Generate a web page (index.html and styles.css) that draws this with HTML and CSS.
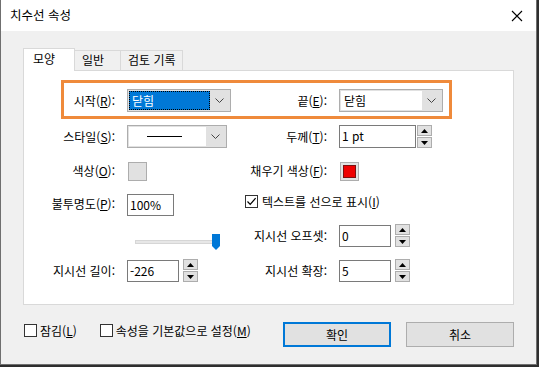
FILE: index.html
```html
<!DOCTYPE html>
<html lang="ko">
<head>
<meta charset="UTF-8" />
<title>치수선 속성</title>
<link rel="stylesheet" href="styles.css">
</head>
<body>

<div class="dialog">
  <div class="titlebar">
    <span class="title">치수선 속성</span>
    <svg class="close" width="12" height="12" viewBox="0 0 12 12">
      <path d="M1 1 L11 11 M11 1 L1 11" stroke="#000" stroke-width="1.1" fill="none" />
    </svg>
  </div>

  <div class="content">
    <div class="tabs">
      <div class="tab active">모양</div>
      <div class="tab">일반</div>
      <div class="tab">검토 기록</div>
    </div>

    <div class="panel">
      <div class="highlight"></div>
      <div class="form-grid">
        <!-- row 1 -->
        <label class="lbl">시작(<u>R</u>):</label>
        <div class="combo w104">
          <span class="combo-text selected">닫힘</span>
          <span class="arrow"><svg width="9" height="5" viewBox="0 0 9 5"><path d="M0.5 0.5 L4.5 4.5 L8.5 0.5" stroke="#444" fill="none" /></svg></span>
        </div>
        <label class="lbl">끝(<u>E</u>):</label>
        <div class="combo w104">
          <span class="combo-text">닫힘</span>
          <span class="arrow"><svg width="9" height="5" viewBox="0 0 9 5"><path d="M0.5 0.5 L4.5 4.5 L8.5 0.5" stroke="#444" fill="none" /></svg></span>
        </div>

        <!-- row 2 -->
        <label class="lbl">스타일(<u>S</u>):</label>
        <div class="combo w100">
          <span class="combo-text"><span class="line-sample"></span></span>
          <span class="arrow"><svg width="9" height="5" viewBox="0 0 9 5"><path d="M0.5 0.5 L4.5 4.5 L8.5 0.5" stroke="#444" fill="none" /></svg></span>
        </div>
        <label class="lbl">두께(<u>T</u>):</label>
        <div class="spin-field">
          <div class="textbox w76">1 pt</div>
          <div class="spinner">
            <span class="spin-btn"><svg width="7" height="4" viewBox="0 0 7 4"><path d="M0 4 L3.5 0 L7 4 Z" fill="#000" /></svg></span>
            <span class="spin-btn"><svg width="7" height="4" viewBox="0 0 7 4"><path d="M0 0 L3.5 4 L7 0 Z" fill="#000" /></svg></span>
          </div>
        </div>

        <!-- row 3 -->
        <label class="lbl">색상(<u>O</u>):</label>
        <div class="swatch"></div>
        <label class="lbl">채우기 색상(<u>F</u>):</label>
        <div class="swatch"><span class="swatch-fill"></span></div>

        <!-- row 4 -->
        <label class="lbl">불투명도(<u>P</u>):</label>
        <div class="textbox w47">100%</div>
        <div class="check-wide">
          <span class="checkbox checked">
            <svg width="11" height="11" viewBox="0 0 11 11"><path d="M1.5 5.5 L4.2 8.3 L9.6 2.2" stroke="#000" stroke-width="1.2" fill="none" /></svg>
          </span>
          <span>텍스트를 선으로 표시(<u>I</u>)</span>
        </div>

        <!-- row 5 -->
        <div class="slider-cell">
          <div class="slider">
            <span class="track"></span>
            <svg class="thumb" width="8" height="16" viewBox="0 0 8 16"><path d="M0 0 H8 V12 L4 16 L0 12 Z" fill="#0078d7" /></svg>
          </div>
        </div>
        <label class="lbl">지시선 오프셋:</label>
        <div class="spin-field">
          <div class="textbox w52">0</div>
          <div class="spinner gap4">
            <span class="spin-btn"><svg width="7" height="4" viewBox="0 0 7 4"><path d="M0 4 L3.5 0 L7 4 Z" fill="#000" /></svg></span>
            <span class="spin-btn"><svg width="7" height="4" viewBox="0 0 7 4"><path d="M0 0 L3.5 4 L7 0 Z" fill="#000" /></svg></span>
          </div>
        </div>

        <!-- row 6 -->
        <label class="lbl">지시선 길이:</label>
        <div class="spin-field">
          <div class="textbox w52">-226</div>
          <div class="spinner gap4">
            <span class="spin-btn"><svg width="7" height="4" viewBox="0 0 7 4"><path d="M0 4 L3.5 0 L7 4 Z" fill="#000" /></svg></span>
            <span class="spin-btn"><svg width="7" height="4" viewBox="0 0 7 4"><path d="M0 0 L3.5 4 L7 0 Z" fill="#000" /></svg></span>
          </div>
        </div>
        <label class="lbl">지시선 확장:</label>
        <div class="spin-field">
          <div class="textbox w52">5</div>
          <div class="spinner gap4">
            <span class="spin-btn"><svg width="7" height="4" viewBox="0 0 7 4"><path d="M0 4 L3.5 0 L7 4 Z" fill="#000" /></svg></span>
            <span class="spin-btn"><svg width="7" height="4" viewBox="0 0 7 4"><path d="M0 0 L3.5 4 L7 0 Z" fill="#000" /></svg></span>
          </div>
        </div>
      </div>
    </div>

    <div class="footer">
      <div class="footer-checks">
        <label class="check"><span class="checkbox"></span><span>잠김(<u>L</u>)</span></label>
        <label class="check"><span class="checkbox"></span><span>속성을 기본값으로 설정(<u>M</u>)</span></label>
      </div>
      <div class="buttons">
        <button class="btn default">확인</button>
        <button class="btn">취소</button>
      </div>
    </div>
  </div>
</div>

</body>
</html>
```

FILE: styles.css
```css
/* Basic reset */
* {
  box-sizing: border-box;
  font-family: "Noto Sans CJK KR", "Noto Sans", sans-serif;
}
body {
  margin: 0;
  background: #2e2e2e;
  font-size: 12px;
  color: #000;
}
u {
  text-decoration: underline;
  text-underline-offset: 1px;
}
.dialog {
  width: 537px;
  height: 365px;
  background: #f0f0f0;
  border: 1px solid #6f6f6f;
  border-top: none;
}
.titlebar {
  height: 31px;
  background: #fff;
  display: flex;
  align-items: center;
  justify-content: space-between;
  padding: 0 13px 0 9px;
}
.title {
  font-size: 12.5px;
  line-height: 1;
}
.content {
  padding: 17px 22px 0 22px;
}

/* tabs */
.tabs {
  display: flex;
  align-items: flex-end;
  height: 22px;
}
.tab {
  height: 20px;
  padding: 0 0 0 7px;
  border: 1px solid #d9d9d9;
  border-bottom: none;
  background: #f0f0f0;
  line-height: 18px;
  margin-left: -1px;
  white-space: nowrap;
}
.tab:nth-child(2) { width: 47px; }
.tab:nth-child(3) { width: 63px; }
.tab.active {
  height: 23px;
  width: 52px;
  margin-left: 0;
  margin-bottom: -1px;
  background: #fff;
  line-height: 20px;
  padding-left: 9px;
  position: relative;
  z-index: 1;
}
.panel {
  position: relative;
  height: 235px;
  background: #fff;
  border: 1px solid #d9d9d9;
}
.highlight {
  position: absolute;
  left: 37px;
  top: 9px;
  width: 391px;
  height: 39px;
  border: 3px solid #ef8a3b;
}

/* form grid */
.form-grid {
  display: grid;
  grid-template-columns: 91px 104px 84px 1fr;
  grid-template-rows: 37px 35px 34px 31px 33px 37px;
  column-gap: 12px;
  padding-top: 11px;
  align-items: center;
}
.lbl {
  text-align: right;
  white-space: nowrap;
  line-height: 1;
}
.combo {
  display: flex;
  height: 23px;
  background: #e1e1e1;
  border: 1px solid #adadad;
  padding: 1px;
}
.w104 { width: 104px; }
.w100 { width: 100px; }
.combo-text {
  flex: 1;
  background: #fff;
  display: flex;
  align-items: center;
  padding-left: 3px;
}
.combo-text.selected {
  background: #0078d7;
  color: #fff;
  outline: 1px dotted #000;
  outline-offset: -1px;
}
.arrow {
  width: 19px;
  display: flex;
  align-items: center;
  justify-content: center;
}
.line-sample {
  display: block;
  width: 35px;
  height: 1px;
  background: #000;
  margin-left: 15px;
}
.textbox {
  height: 22px;
  border: 1px solid #7a7a7a;
  background: #fff;
  padding: 0 2px;
  line-height: 20px;
}
.w76 { width: 77px; height: 23px; }
.w47 { width: 47px; align-self: end; margin-bottom: 3px; }
.w52 { width: 52px; }
.spin-field {
  display: flex;
  align-items: center;
}
.spinner {
  display: flex;
  flex-direction: column;
  gap: 1px;
  margin-left: 1px;
}
.spinner.gap4 { margin-left: 4px; }
.spin-btn {
  width: 15px;
  height: 11px;
  background: #e1e1e1;
  border: 1px solid #adadad;
  display: flex;
  align-items: center;
  justify-content: center;
}
.swatch {
  width: 19px;
  height: 19px;
  margin-left: 1px;
  background: #e1e1e1;
  border: 1px solid #adadad;
  display: flex;
  align-items: center;
  justify-content: center;
}
.swatch-fill {
  width: 13px;
  height: 13px;
  background: #ee0000;
  border: 1px solid #7a1010;
}
.check-wide {
  grid-column: 3 / 5;
  display: flex;
  align-items: center;
  gap: 4px;
  padding-left: 2px;
  align-self: start;
  margin-top: 5px;
}
.checkbox {
  width: 13px;
  height: 13px;
  border: 1px solid #333;
  background: #fff;
  display: inline-flex;
  align-items: center;
  justify-content: center;
  flex: none;
}
.slider-cell {
  grid-column: 2;
  align-self: end;
  margin-bottom: 2px;
}
.slider {
  position: relative;
  width: 86px;
  height: 16px;
  margin-left: 8px;
  display: flex;
  align-items: center;
}
.track {
  display: block;
  width: 82px;
  height: 4px;
  background: #e7e7e7;
  border: 1px solid #d6d6d6;
}
.thumb {
  position: absolute;
  left: 77px;
  top: 0;
}

/* footer */
.footer {
  display: flex;
  justify-content: space-between;
  padding-top: 17px;
  padding-left: 1px;
}
.footer-checks {
  display: flex;
  gap: 23px;
  padding-top: 1px;
}
.check {
  display: flex;
  align-items: center;
  gap: 3px;
  height: 14px;
}
.buttons {
  display: flex;
  gap: 15px;
}
.btn {
  width: 108px;
  height: 25px;
  background: #e1e1e1;
  border: 1px solid #adadad;
  font-size: 12px;
  padding: 0;
}
.btn.default {
  border: 2px solid #0078d7;
}
```
